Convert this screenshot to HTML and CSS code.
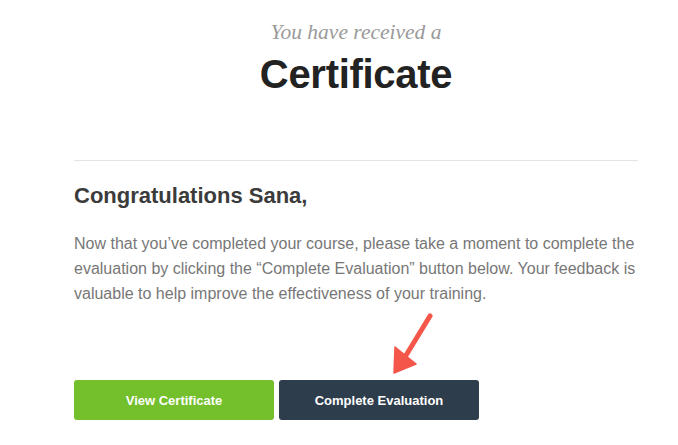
FILE: index.html
```html
<!DOCTYPE html>
<html lang="en">
<head>
<meta charset="utf-8">
<title>Certificate</title>
<link rel="stylesheet" href="styles.css">
</head>
<body>
<div class="page">
  <div class="column">
    <header class="header">
      <div class="sub">You have received a</div>
      <h1 class="title">Certificate</h1>
    </header>
    <hr class="rule">
    <h2 class="greeting">Congratulations Sana,</h2>
    <p class="message">Now that you’ve completed your course, please take a moment to complete the evaluation by clicking the “Complete Evaluation” button below. Your feedback is valuable to help improve the effectiveness of your training.</p>
    <div class="actions">
      <a class="btn btn-green" href="#">View Certificate</a>
      <a class="btn btn-dark" href="#">Complete Evaluation</a>
    </div>
  </div>
  <svg class="arrow" viewBox="385 308 50 70" width="50" height="70" aria-hidden="true">
    <line x1="430" y1="316" x2="405" y2="357" stroke="#f4564a" stroke-width="5" stroke-linecap="round"/>
    <polygon points="394,373 395,347 416,364" fill="#f4564a" stroke="#f4564a" stroke-width="1.5" stroke-linejoin="round"/>
  </svg>
</div>
</body>
</html>
```
FILE: styles.css
```css
html, body {
  margin: 0;
  padding: 0;
  background: #ffffff;
}

.page {
  position: relative;
  width: 678px;
  height: 445px;
  overflow: hidden;
}

.column {
  margin-left: 74px;
  width: 564px;
  font-family: "Liberation Sans", Arial, Helvetica, sans-serif;
}

.header {
  padding-top: 19px;
  text-align: center;
}

.sub {
  font-family: "Liberation Serif", "Times New Roman", serif;
  font-style: italic;
  font-size: 21.5px;
  line-height: 26px;
  color: #9a9a9a;
}

.title {
  margin: 5px 0 0;
  font-size: 40px;
  line-height: 48px;
  font-weight: bold;
  color: #222222;
  letter-spacing: -0.3px;
}

.rule {
  margin: 62px 0 0;
  border: 0;
  border-top: 1px solid #e4e4e4;
  height: 0;
}

.greeting {
  margin: 21px 0 0;
  font-size: 22px;
  line-height: 28px;
  font-weight: bold;
  color: #3b3b3b;
}

.message {
  margin: 21px 0 0;
  font-size: 16px;
  line-height: 25px;
  color: #777777;
}

.actions {
  margin-top: 74px;
  display: flex;
  gap: 5px;
}

.btn {
  display: flex;
  align-items: center;
  justify-content: center;
  width: 200px;
  height: 40px;
  border-radius: 3px;
  font-size: 13px;
  font-weight: bold;
  color: #ffffff;
  text-decoration: none;
}

.btn-green {
  background: #73bf2c;
}

.btn-dark {
  background: #2e3d4b;
}

.arrow {
  position: absolute;
  left: 385px;
  top: 308px;
}
```
